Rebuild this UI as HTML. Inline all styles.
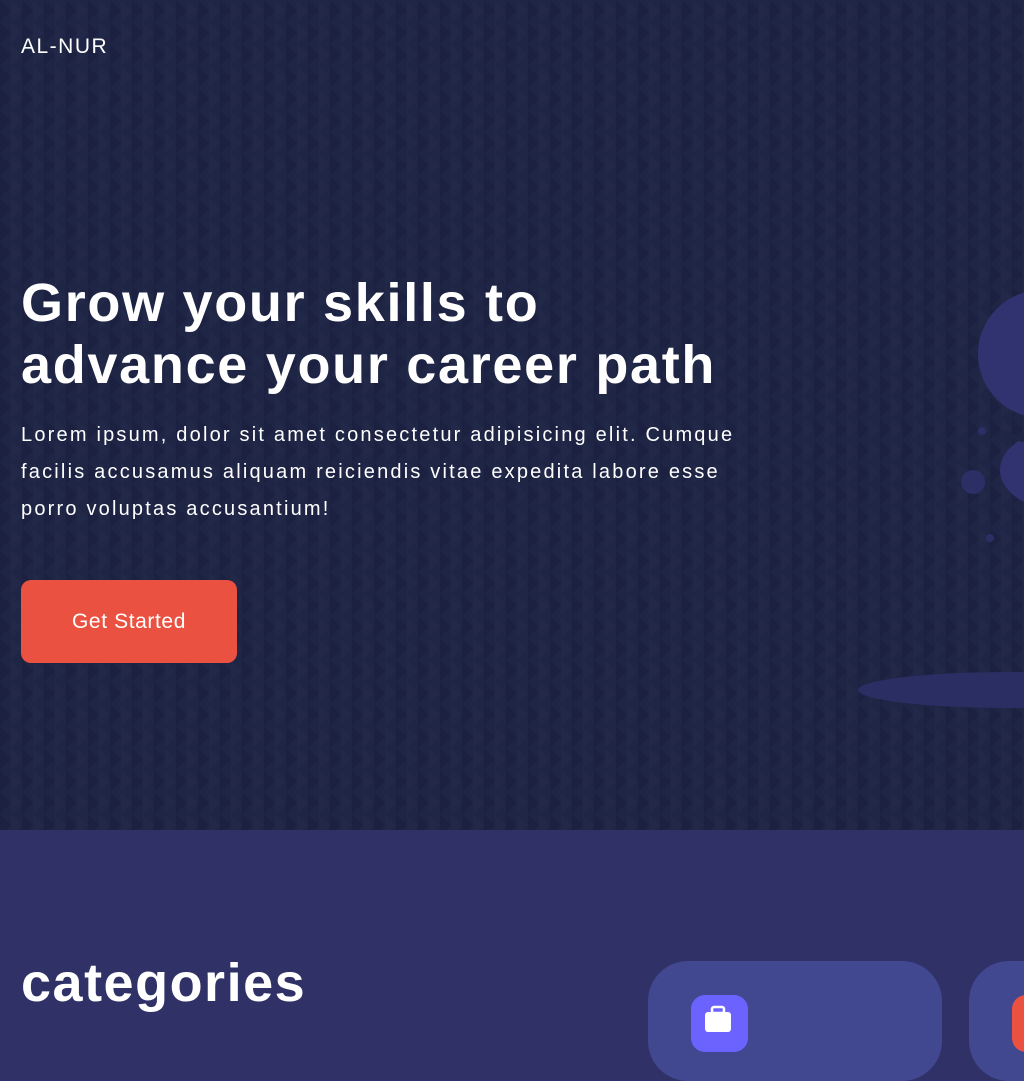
<!DOCTYPE html>
<html><head><meta charset="utf-8"><style>
*{margin:0;padding:0;box-sizing:border-box}
body{width:1024px;height:1024px;overflow:hidden;font-family:"Liberation Sans",sans-serif;background:#2f3167;position:relative}
.hero{position:absolute;left:0;top:0;width:1024px;height:830px;background:#1f2544;overflow:hidden}
.logo{position:absolute;left:21px;top:35px;color:#fff;font-size:21px;letter-spacing:1.5px}
h1{position:absolute;left:21px;top:272px;color:#fff;font-size:54px;line-height:62px;font-weight:bold;letter-spacing:1.7px;white-space:nowrap}
p{position:absolute;left:21px;top:417px;color:#fff;font-size:20px;line-height:37px;letter-spacing:2.2px;white-space:nowrap}
.btn{position:absolute;left:21px;top:580px;width:216px;height:83px;background:#eb5140;border-radius:10px;color:#fff;font-size:21px;letter-spacing:.6px;text-align:center;line-height:83px}
h2{position:absolute;left:21px;top:952px;color:#fff;font-size:54px;font-weight:bold;letter-spacing:1.5px}
.card{position:absolute;top:961px;width:294px;height:120px;background:#414890;border-radius:40px}
</style></head><body>
<div class="hero">
<svg width="1024" height="830" style="position:absolute;left:0;top:0">
<defs><pattern id="z" width="22" height="22" patternUnits="userSpaceOnUse">
<path d="M0 0 L11 11 L0 22 Z" fill="#1c2140" opacity=".8"/>
<path d="M11 0 L22 11 L11 22 Z" fill="#232a4b" opacity=".6"/></pattern></defs>
<rect width="1024" height="830" fill="url(#z)"/>
<circle cx="1042" cy="354" r="64" fill="#313371"/>
<ellipse cx="1060" cy="470" rx="60" ry="40" fill="#313371"/>
<path d="M1000 432 L1024 440" stroke="#1f2544" stroke-width="5"/>
<circle cx="982" cy="431" r="4" fill="#2c2f66"/>
<circle cx="973" cy="482" r="12" fill="#2c2f66"/>
<circle cx="990" cy="538" r="4" fill="#2c2f66"/>
<ellipse cx="1010" cy="690" rx="152" ry="18" fill="#2b2e62"/>
</svg>
<div class="logo">AL-NUR</div>
<h1>Grow your skills to<br>advance your career path</h1>
<p>Lorem ipsum, dolor sit amet consectetur adipisicing elit. Cumque<br>facilis accusamus aliquam reiciendis vitae expedita labore esse<br>porro voluptas accusantium!</p>
<div class="btn">Get Started</div>
</div>
<h2>categories</h2>
<div class="card" style="left:648px"><div style="position:absolute;left:43px;top:34px;width:57px;height:57px;background:#6c63ff;border-radius:14px">
<svg width="57" height="57" style="position:absolute;left:0;top:0"><rect x="14" y="17" width="26" height="20" rx="3" fill="#fff"/><rect x="21" y="12" width="12" height="6" rx="2" fill="none" stroke="#fff" stroke-width="2.5"/></svg></div></div>
<div class="card" style="left:969px"><div style="position:absolute;left:43px;top:34px;width:57px;height:57px;background:#eb5140;border-radius:14px"></div></div>
</body></html>
